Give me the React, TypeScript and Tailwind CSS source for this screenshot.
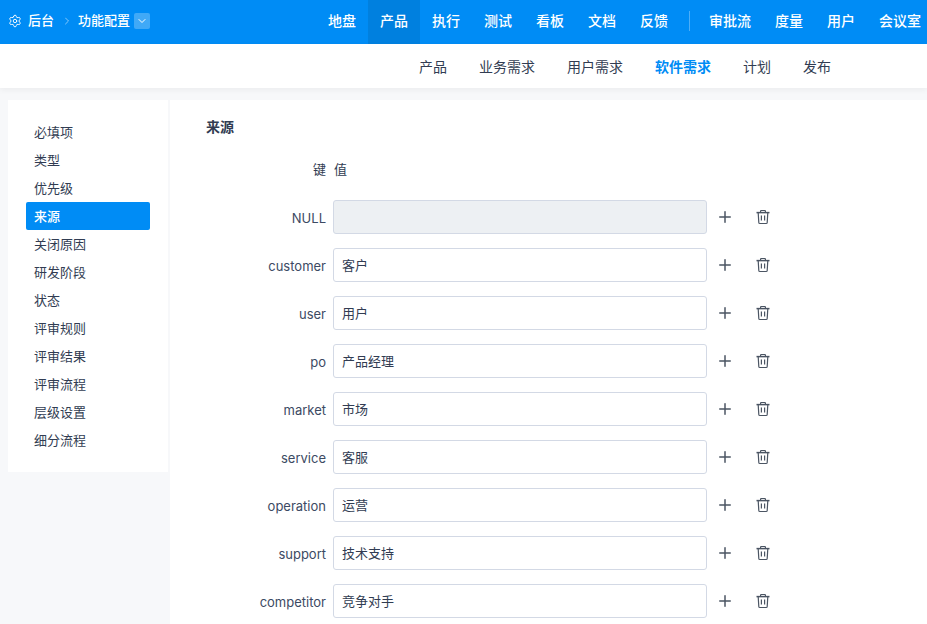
import { Settings, ChevronRight, ChevronDown, Plus } from "lucide-react";

const nav1 = ["地盘", "产品", "执行", "测试", "看板", "文档", "反馈"];
const nav2 = ["审批流", "度量", "用户", "会议室"];
const sub = ["产品", "业务需求", "用户需求", "软件需求", "计划", "发布"];
const side = ["必填项", "类型", "优先级", "来源", "关闭原因", "研发阶段", "状态", "评审规则", "评审结果", "评审流程", "层级设置", "细分流程"];
const rows: [string, string][] = [
  ["NULL", ""],
  ["customer", "客户"],
  ["user", "用户"],
  ["po", "产品经理"],
  ["market", "市场"],
  ["service", "客服"],
  ["operation", "运营"],
  ["support", "技术支持"],
  ["competitor", "竞争对手"],
];

function NavItem({ label, active }: { label: string; active?: boolean }) {
  return (
    <div className={"flex h-11 shrink-0 items-center px-3 pb-[3px] text-sm font-medium text-white " + (active ? "bg-[#0080df]" : "")}>
      {label}
    </div>
  );
}

function TrashIcon() {
  return (
    <svg width="16" height="16" viewBox="0 0 16 16" fill="none" stroke="#4b5563" strokeWidth="1.2" className="ml-[21px] shrink-0">
      <path d="M1.5 3.6h13" strokeWidth="1.5" />
      <path d="M5.6 3.3V2.1c0-.4.3-.6.6-.6h3.6c.3 0 .6.2.6.6v1.2" />
      <path d="M3.2 3.8l.6 9.6c0 .6.5 1.1 1.1 1.1h6.2c.6 0 1.1-.5 1.1-1.1l.6-9.6" />
      <path d="M6.4 6.6v5M9.6 6.6v5" />
    </svg>
  );
}

export default function App() {
  return (
    <div className="flex h-[624px] w-[927px] flex-col overflow-hidden bg-[#f7f8fa] text-[13px] text-[#313c52] [font-family:'Inter','Noto_Sans_CJK_SC',sans-serif]">
      <header className="flex h-11 shrink-0 items-center bg-[#008cf5] text-white">
        <div className="flex w-[316px] shrink-0 items-center pb-[2px] pl-[8px] text-[13px] font-medium">
          <Settings size={14} strokeWidth={1.6} />
          <span className="ml-[6px]">后台</span>
          <ChevronRight size={12} strokeWidth={1.5} className="ml-[7px] opacity-70" />
          <span className="ml-[5px]">功能配置</span>
          <span className="ml-[4px] flex h-4 w-4 items-center justify-center rounded-[2px] bg-white/25">
            <ChevronDown size={12} strokeWidth={2} />
          </span>
        </div>
        <nav className="flex items-center">
          {nav1.map((n) => <NavItem key={n} label={n} active={n === "产品"} />)}
          <div className="mb-[3px] ml-[9px] mr-[7px] h-5 w-px shrink-0 bg-white/30" />
          {nav2.map((n) => <NavItem key={n} label={n} />)}
        </nav>
      </header>
      <div className="flex h-11 shrink-0 items-center gap-8 bg-white pl-[419px] pt-[2px] text-sm text-[#313c52] shadow-[0_2px_6px_rgba(0,0,0,0.05)]">
        {sub.map((s) => (
          <span key={s} className={s === "软件需求" ? "font-bold text-[#008cf5]" : ""}>{s}</span>
        ))}
      </div>
      <div className="mt-3 flex min-h-0 flex-1 pl-2">
        <aside className="h-[372px] w-40 shrink-0 bg-white p-[18px]">
          {side.map((s) => (
            <div key={s} className={"flex h-7 items-center rounded-[2px] px-2 pt-[1px] " + (s === "来源" ? "bg-[#008cf5] font-medium text-white" : "")}>{s}</div>
          ))}
        </aside>
        <main className="ml-[2px] flex-1 bg-white pl-9 pt-[17px]">
          <h2 className="text-sm font-bold leading-5">来源</h2>
          <div className="mt-[23px] flex h-5 items-center">
            <span className="w-[120px] text-right">键</span>
            <span className="ml-2">值</span>
          </div>
          <div className="mt-5 flex flex-col gap-[14px]">
            {rows.map(([k, v]) => (
              <div key={k} className="flex h-[34px] items-center">
                <span className="w-[120px] pt-[3px] text-right text-[#3c4a63]">{k}</span>
                <div className={"ml-[7px] flex h-[34px] w-[374px] items-center rounded-[3px] border border-[#d3d9e5] px-2 pt-[1px] " + (k === "NULL" ? "bg-[#edf0f3]" : "bg-white")}>{v}</div>
                <Plus size={18} strokeWidth={2} className="ml-[9px] text-[#4b5563]" />
                <TrashIcon />
              </div>
            ))}
          </div>
        </main>
      </div>
    </div>
  );
}
